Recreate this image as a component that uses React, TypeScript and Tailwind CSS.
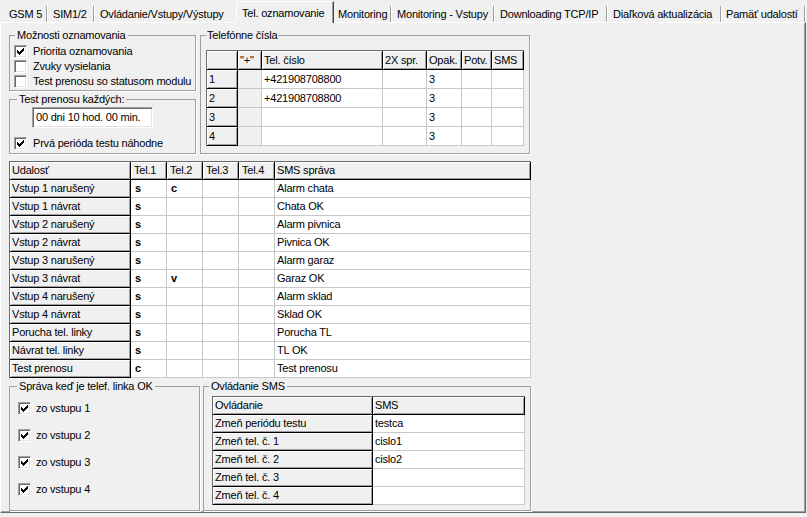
const tabs = [
  { label: "GSM 5", cls: "w-[47px] pl-[9px]" },
  { label: "SIM1/2", cls: "w-[47px] pl-[6px]" },
  { label: "Ovládanie/Vstupy/Výstupy", cls: "w-[142px] pl-[6px]", noSep: true },
  { label: "Tel. oznamovanie", active: true, cls: "w-[98px] pl-[5px]" },
  { label: "Monitoring", cls: "w-[57px] pl-[4px]" },
  { label: "Monitoring - Vstupy", cls: "w-[103px] pl-[6px]" },
  { label: "Downloading TCP/IP", cls: "w-[113px] pl-[6px]" },
  { label: "Diaľková aktualizácia", cls: "w-[114px] pl-[6px]" },
  { label: "Pamäť udalostí", cls: "w-[84px] pl-[5px]" },
];

const events = [
  ["Vstup 1 narušený", "s", "c", "Alarm chata"],
  ["Vstup 1 návrat", "s", "", "Chata OK"],
  ["Vstup 2 narušený", "s", "", "Alarm pivnica"],
  ["Vstup 2 návrat", "s", "", "Pivnica OK"],
  ["Vstup 3 narušený", "s", "", "Alarm garaz"],
  ["Vstup 3 návrat", "s", "v", "Garaz OK"],
  ["Vstup 4 narušený", "s", "", "Alarm sklad"],
  ["Vstup 4 návrat", "s", "", "Sklad OK"],
  ["Porucha tel. linky", "s", "", "Porucha TL"],
  ["Návrat tel. linky", "s", "", "TL OK"],
  ["Test prenosu", "c", "", "Test prenosu"],
];

const phones = [
  ["1", "+421908708800"],
  ["2", "+421908708800"],
  ["3", ""],
  ["4", ""],
];

const smsCmds = [
  ["Zmeň periódu testu", "testca"],
  ["Zmeň tel. č. 1", "cislo1"],
  ["Zmeň tel. č. 2", "cislo2"],
  ["Zmeň tel. č. 3", ""],
  ["Zmeň tel. č. 4", ""],
];

const fixedCell =
  "flex items-center overflow-hidden whitespace-nowrap bg-[#f0f0f0] border-r border-b border-black shadow-[inset_1px_1px_0_#fff,inset_-1px_-1px_0_#a0a0a0]";
const dataCell =
  "flex items-center overflow-hidden whitespace-nowrap bg-white border-r border-b border-[#c8c8c8]";
const grayCell =
  "flex items-center overflow-hidden whitespace-nowrap bg-[#f0f0f0] border-r border-b border-[#c8c8c8]";

function Check({ on }: { on: boolean }) {
  return (
    <span className="flex h-[13px] w-[13px] shrink-0 items-center justify-center border border-t-[#a0a0a0] border-l-[#a0a0a0] border-r-white border-b-white bg-white shadow-[inset_1px_1px_0_#696969,inset_-1px_-1px_0_#e3e3e3]">
      {on && (
        <svg width="7" height="7" viewBox="0 0 7 7" shapeRendering="crispEdges">
          <rect x="0" y="2" width="1" height="3" fill="#000" />
          <rect x="1" y="3" width="1" height="3" fill="#000" />
          <rect x="2" y="4" width="1" height="3" fill="#000" />
          <rect x="3" y="3" width="1" height="3" fill="#000" />
          <rect x="4" y="2" width="1" height="3" fill="#000" />
          <rect x="5" y="1" width="1" height="3" fill="#000" />
          <rect x="6" y="0" width="1" height="3" fill="#000" />
        </svg>
      )}
    </span>
  );
}

function CheckRow({ label, on, className = "" }: { label: string; on: boolean; className?: string }) {
  return (
    <div className={`flex items-center ${className}`}>
      <Check on={on} />
      <span className="ml-[6px] whitespace-nowrap">{label}</span>
    </div>
  );
}

function TabStrip() {
  return (
    <div className="flex h-[22px] items-end">
      {tabs.map((t) =>
        t.active ? (
          <div
            key={t.label}
            className={`relative z-10 -mb-px h-[22px] shrink-0 whitespace-nowrap border-t border-l border-r border-t-white border-l-white border-r-[#404040] bg-[#f0f0f0] pt-[5px] leading-[13px] shadow-[inset_-1px_0_0_#a0a0a0] ${t.cls}`}
          >
            {t.label}
          </div>
        ) : (
          <div key={t.label} className={`flex h-[17px] shrink-0 items-start ${t.cls}`}>
            <span className="flex-1 whitespace-nowrap pt-[3px] leading-[13px]">{t.label}</span>
            {!t.noSep && (
              <span className="mt-[1px] h-[16px] w-[1px] shrink-0 bg-[#a0a0a0] shadow-[1px_0_0_#fff]" />
            )}
          </div>
        )
      )}
    </div>
  );
}

export default function App() {
  return (
    <div className="h-[517px] w-[807px] overflow-hidden bg-[#f0f0f0] font-['Liberation_Sans',Arial,sans-serif] text-[11px] leading-[13px] tracking-[-0.2px] text-black">
      <TabStrip />
      <div className="flex h-[491px] w-[806px] flex-col border border-t-white border-l-white border-r-[#696969] border-b-[#696969] pl-[8px] pt-[6px] shadow-[inset_-1px_-1px_0_#a0a0a0]">
        {/* top row */}
        <div className="flex gap-[4px]">
          <div className="flex w-[187px] flex-col gap-[2px]">
            <fieldset className="h-[62px] border border-[#a0a0a0] pl-[4px] pt-[2px] shadow-[1px_1px_0_#fff]">
              <legend className="ml-[1px] px-[2px]">Možnosti oznamovania</legend>
              <CheckRow label="Priorita oznamovania" on className="h-[15px]" />
              <CheckRow label="Zvuky vysielania" on={false} className="h-[15px]" />
              <CheckRow label="Test prenosu so statusom modulu" on={false} className="h-[15px]" />
            </fieldset>
            <fieldset className="h-[61px] border border-[#a0a0a0] pl-[4px] shadow-[1px_1px_0_#fff]">
              <legend className="ml-[3px] px-[2px]">Test prenosu každých:</legend>
              <div className="ml-[18px] mt-[1px] flex h-[21px] w-[121px] items-center border border-t-[#a0a0a0] border-l-[#a0a0a0] border-r-white border-b-white bg-white pl-[3px] shadow-[inset_1px_1px_0_#696969,inset_-1px_-1px_0_#e3e3e3]">
                00 dni 10 hod. 00 min.
              </div>
              <CheckRow label="Prvá perióda testu náhodne" on className="mt-[8px] h-[15px]" />
            </fieldset>
          </div>
          <fieldset className="h-[125px] w-[330px] border border-[#a0a0a0] pl-[5px] shadow-[1px_1px_0_#fff]">
            <legend className="px-[1px]">Telefónne čísla</legend>
            <div className="mt-[8px] grid w-[318px] grid-cols-[31px_24px_121px_44px_35px_30px_32px] auto-rows-[19px] border-l border-t border-[#696969]">
              {["", '"+"', "Tel. číslo", "2X spr.", "Opak.", "Potv.", "SMS"].map((h, i) => (
                <div key={i} className={`${fixedCell} pl-[2px]`}>
                  {h}
                </div>
              ))}
              {phones.map(([n, num]) => (
                <div key={n} className="contents">
                  <div className={`${fixedCell} pl-[2px]`}>{n}</div>
                  <div className={grayCell} />
                  <div className={`${dataCell} pl-[2px]`}>{num}</div>
                  <div className={dataCell} />
                  <div className={`${dataCell} pl-[2px]`}>3</div>
                  <div className={dataCell} />
                  <div className={dataCell} />
                </div>
              ))}
            </div>
          </fieldset>
        </div>

        {/* events grid */}
        <div className="mt-[7px] grid w-[522px] grid-cols-[121px_36px_36px_36px_36px_256px] auto-rows-[18px] border-l border-t border-[#696969]">
          {["Udalosť", "Tel.1", "Tel.2", "Tel.3", "Tel.4", "SMS správa"].map((h, i) => (
            <div key={h} className={`${fixedCell} ${i >= 1 && i <= 4 ? "pl-[3px]" : "pl-[2px]"}`}>
              {h}
            </div>
          ))}
          {events.map(([name, t1, t2, msg]) => (
            <div key={name} className="contents">
              <div className={`${fixedCell} pl-[2px]`}>{name}</div>
              <div className={`${dataCell} pl-[4px] font-bold`}>{t1}</div>
              <div className={`${dataCell} pl-[4px] font-bold`}>{t2}</div>
              <div className={dataCell} />
              <div className={dataCell} />
              <div className={`${dataCell} pl-[2px]`}>{msg}</div>
            </div>
          ))}
        </div>

        {/* bottom row */}
        <div className="mt-[2px] flex gap-[3px]">
          <fieldset className="h-[131px] w-[191px] border border-[#a0a0a0] pl-[4px] pt-[2px] shadow-[1px_1px_0_#fff]">
            <legend className="ml-[3px] px-[2px]">Správa keď je telef. linka OK</legend>
            {[1, 2, 3, 4].map((n) => (
              <div key={n} className="ml-[4px] flex h-[27px] items-center">
                <Check on />
                <span className="ml-[5px]">zo vstupu {n}</span>
              </div>
            ))}
          </fieldset>
          <fieldset className="h-[131px] w-[328px] border border-[#a0a0a0] pl-[4px] shadow-[1px_1px_0_#fff]">
            <legend className="ml-[1px] px-[2px]">Ovládanie SMS</legend>
            <div className="ml-[4px] mt-[3px] grid w-[313px] grid-cols-[160px_152px] auto-rows-[18px] border-l border-t border-[#696969]">
              <div className={`${fixedCell} pl-[2px]`}>Ovládanie</div>
              <div className={`${fixedCell} pl-[2px]`}>SMS</div>
              {smsCmds.map(([cmd, val]) => (
                <div key={cmd} className="contents">
                  <div className={`${fixedCell} pl-[2px]`}>{cmd}</div>
                  <div className={`${dataCell} pl-[2px]`}>{val}</div>
                </div>
              ))}
            </div>
          </fieldset>
        </div>
      </div>
    </div>
  );
}
